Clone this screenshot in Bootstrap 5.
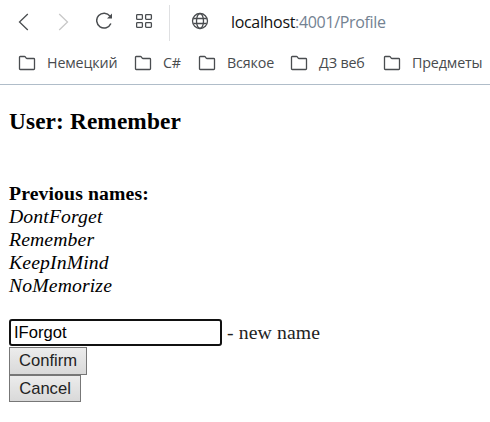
<!DOCTYPE html>
<html lang="en">
<head>
<meta charset="utf-8">
<title>Profile</title>
<link href="https://cdn.jsdelivr.net/npm/bootstrap@5.3.0/dist/css/bootstrap.min.css" rel="stylesheet">
<style>
body{font-family:"Liberation Serif",serif;color:#000;font-size:19.7px;letter-spacing:.13px;line-height:23px;overflow:hidden}
svg{display:block;fill:none;stroke:#4a4d50;stroke-width:1.3;flex:none}
.chrome{font-family:"Open Sans","Noto Sans",sans-serif;height:85px;border-bottom:1px solid #b0bdc9}
.toolbar{height:42px;padding-left:16px}
.tool{width:24px;height:24px;margin-right:16px}
.tool-off{stroke:#c8c8c8}
.rule{width:1px;height:36px;background:#dfe0e2;margin:4px 18px 0 -7px}
.address{font-size:16px;letter-spacing:-.33px;line-height:24px;margin:2px 0 0 19px;color:#738292;white-space:nowrap}
.address b{font-weight:400;color:#111}
.marks{height:42px;padding-left:18px}
.mark-item{white-space:nowrap;font-size:14.3px;letter-spacing:-.15px;line-height:20px;color:#484b4e}
.mark-item svg{margin-right:11px}
.w1{width:116px}.w2{width:64px}.w3{width:92px}.w4{width:93px}
main{padding:23px 9px 0}
h1{font-size:23.3px;line-height:26px;margin:0 0 48px;font-weight:700}
.names{margin-bottom:22px}
.name-field{width:213px;height:27px;border:2px solid #111;border-radius:3px;padding:0 3px;font:16.6px/22px "Liberation Sans",sans-serif;color:#000;outline:0}
.hint{color:#222;margin-left:5px}
.flat{display:block;height:28px;border:1px solid #777;border-radius:0;padding:0;background:linear-gradient(#ececec,#d9d9d9);font:16.6px/24px "Liberation Sans",sans-serif;color:#222}
.confirm{width:78px;margin-top:1px}.cancel{width:72px;height:27px}
</style>
<script src="https://cdn.jsdelivr.net/npm/bootstrap@5.3.0/dist/js/bootstrap.bundle.min.js"></script>
</head>
<body class="bg-white">
<svg width="0" height="0" class="d-none"><symbol id="folder" viewBox="0 0 18 16"><path d="M1.5 13.7V2.2q0-.7.7-.7h4.3q.5 0 .8.4l.9 1.2q.3.4.8.4h6.7q.8 0 .8.8v9.4q0 .8-.8.8H2.3q-.8 0-.8-.8z"/></symbol></svg>
<header class="chrome">
<div class="toolbar d-flex align-items-center">
<svg class="tool" viewBox="0 0 24 24"><path d="M11.8 5 3.5 13l8.3 8"/></svg>
<svg class="tool tool-off" viewBox="0 0 24 24"><path d="M3.2 5l8.3 8-8.3 8"/></svg>
<svg class="tool" viewBox="0 0 24 24"><path d="M14 7.1A7.4 7.4 0 1 0 14.9 14.5" stroke-width="1.5"/><path d="M16 4.5v5h-5z" fill="#4a4d50" stroke="none"/></svg>
<svg class="tool" viewBox="0 0 24 24"><rect x=".6" y="5.6" width="5.8" height="4.8" rx=".8"/><rect x="9.6" y="5.6" width="5.8" height="4.8" rx=".8"/><rect x=".6" y="13.6" width="5.8" height="4.8" rx=".8"/><rect x="9.6" y="13.6" width="5.8" height="4.8" rx=".8"/></svg>
<div class="rule"></div>
<svg width="24" height="24" viewBox="0 0 24 24"><circle cx="12" cy="12" r="7.5"/><ellipse cx="12" cy="12" rx="3.5" ry="7.5"/><path d="M5.3 9.5h13.4M5.3 14.5h13.4"/></svg>
<div class="address"><b>localhost</b>:4001/Profile</div>
</div>
<nav class="marks d-flex align-items-center">
<div class="mark-item d-flex align-items-center w1"><svg width="18" height="16"><use href="#folder"/></svg><span>Немецкий</span></div>
<div class="mark-item d-flex align-items-center w2"><svg width="18" height="16"><use href="#folder"/></svg><span>C#</span></div>
<div class="mark-item d-flex align-items-center w3"><svg width="18" height="16"><use href="#folder"/></svg><span>Всякое</span></div>
<div class="mark-item d-flex align-items-center w4"><svg width="18" height="16"><use href="#folder"/></svg><span>ДЗ веб</span></div>
<div class="mark-item d-flex align-items-center"><svg width="18" height="16"><use href="#folder"/></svg><span>Предметы</span></div>
</nav>
</header>
<main>
<h1>User: Remember</h1>
<div class="names"><strong>Previous names:</strong><br><em>DontForget<br>Remember<br>KeepInMind<br>NoMemorize</em></div>
<div class="d-flex align-items-center"><input class="name-field" type="text" value="IForgot" aria-label="new name"><span class="hint">- new name</span></div>
<button class="flat confirm" type="button">Confirm</button>
<button class="flat cancel" type="button">Cancel</button>
</main>
</body>
</html>
